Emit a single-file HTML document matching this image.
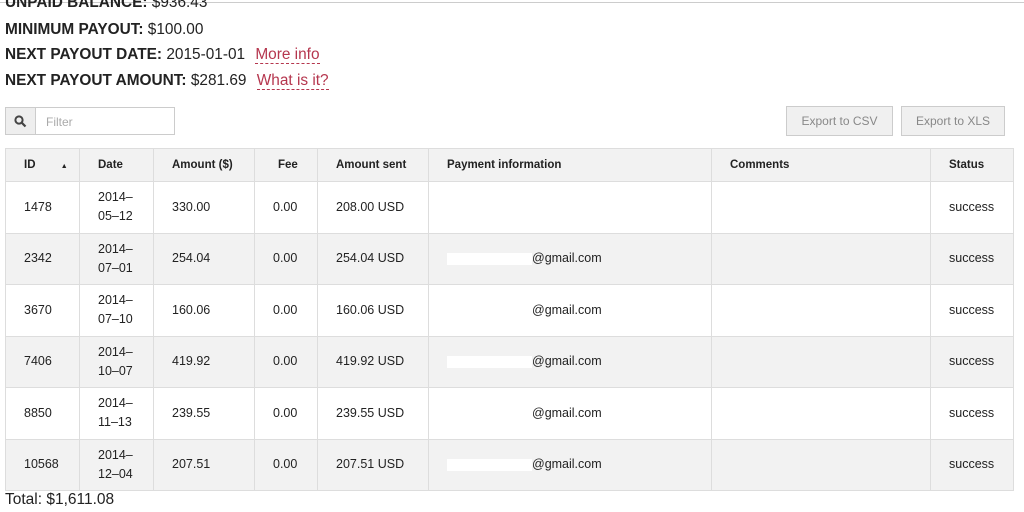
<!DOCTYPE html>
<html><head><style>
*{margin:0;padding:0;box-sizing:border-box}
body{width:1024px;height:512px;overflow:hidden;background:#fff;font-family:"Liberation Sans",sans-serif;color:#222;position:relative}
.topline{position:absolute;left:0;top:0;width:1024px;height:3px;border-bottom:1px solid #ccc}
.l{position:absolute;left:5px;font-size:15.4px;white-space:nowrap}
.l b{font-weight:bold}
.a{color:#b5364e;border-bottom:1px dashed #b5364e;margin-left:6px}
.filter{position:absolute;left:5px;top:107px;width:170px;height:28px;border:1px solid #ccc;display:flex}
.filter .ic{width:30px;background:#eee;border-right:1px solid #ccc;display:flex;align-items:center;justify-content:center}
.filter span{color:#aaa;font-size:12px;padding:7px 0 0 10px}
.btn{position:absolute;top:106px;height:30px;border:1px solid #ccc;background:#f0f0f0;color:#888;font-size:12px;text-align:center;line-height:28px}
table{position:absolute;left:5px;top:148px;border-collapse:collapse;font-size:12.5px;width:1008px;table-layout:fixed}
td,th{border:1px solid #ddd;padding:0 0 0 18px;text-align:left;vertical-align:middle}
th{height:33px;background:#f2f2f2;font-weight:bold;font-size:11.5px}
td{height:51.5px;line-height:19px}
tr.g td{background:#f2f2f2}
.blur{display:inline-block;width:85px;height:12px;vertical-align:middle}
tr.g .blur{background:#fff}
</style></head><body>
<div class="topline"></div>
<div class="l" style="top:-6px"><b>UNPAID BALANCE:</b> $936.43</div>
<div class="l" style="top:21px"><b>MINIMUM PAYOUT:</b> $100.00</div>
<div class="l" style="top:46px"><b>NEXT PAYOUT DATE:</b> 2015-01-01 <span class="a">More info</span></div>
<div class="l" style="top:72px"><b>NEXT PAYOUT AMOUNT:</b> $281.69 <span class="a">What is it?</span></div>
<div class="filter"><div class="ic"><svg width="13" height="13" viewBox="0 0 13 13"><circle cx="5" cy="5" r="3.6" fill="none" stroke="#444" stroke-width="2"/><path d="M7.7 7.7L11.5 11.5" stroke="#444" stroke-width="2.2"/></svg></div><span>Filter</span></div>
<div class="btn" style="left:786px;width:107px">Export to CSV</div>
<div class="btn" style="left:901px;width:104px">Export to XLS</div>
<table>
<colgroup><col style="width:74px"><col style="width:74px"><col style="width:101px"><col style="width:63px"><col style="width:111px"><col style="width:283px"><col style="width:219px"><col style="width:83px"></colgroup>
<tr><th>ID <span style="font-size:7px;margin-left:22px">▲</span></th><th>Date</th><th>Amount ($)</th><th style="padding-left:23px">Fee</th><th>Amount sent</th><th>Payment information</th><th>Comments</th><th>Status</th></tr>
<tr><td>1478</td><td>2014–<br>05–12</td><td>330.00</td><td>0.00</td><td>208.00 USD</td><td></td><td></td><td>success</td></tr>
<tr class="g"><td>2342</td><td>2014–<br>07–01</td><td>254.04</td><td>0.00</td><td>254.04 USD</td><td><span class="blur"></span>@gmail.com</td><td></td><td>success</td></tr>
<tr><td>3670</td><td>2014–<br>07–10</td><td>160.06</td><td>0.00</td><td>160.06 USD</td><td><span class="blur"></span>@gmail.com</td><td></td><td>success</td></tr>
<tr class="g"><td>7406</td><td>2014–<br>10–07</td><td>419.92</td><td>0.00</td><td>419.92 USD</td><td><span class="blur"></span>@gmail.com</td><td></td><td>success</td></tr>
<tr><td>8850</td><td>2014–<br>11–13</td><td>239.55</td><td>0.00</td><td>239.55 USD</td><td><span class="blur"></span>@gmail.com</td><td></td><td>success</td></tr>
<tr class="g"><td>10568</td><td>2014–<br>12–04</td><td>207.51</td><td>0.00</td><td>207.51 USD</td><td><span class="blur"></span>@gmail.com</td><td></td><td>success</td></tr>
</table>
<div class="l" style="top:491px;font-size:15.5px">Total: $1,611.08</div>
</body></html>
